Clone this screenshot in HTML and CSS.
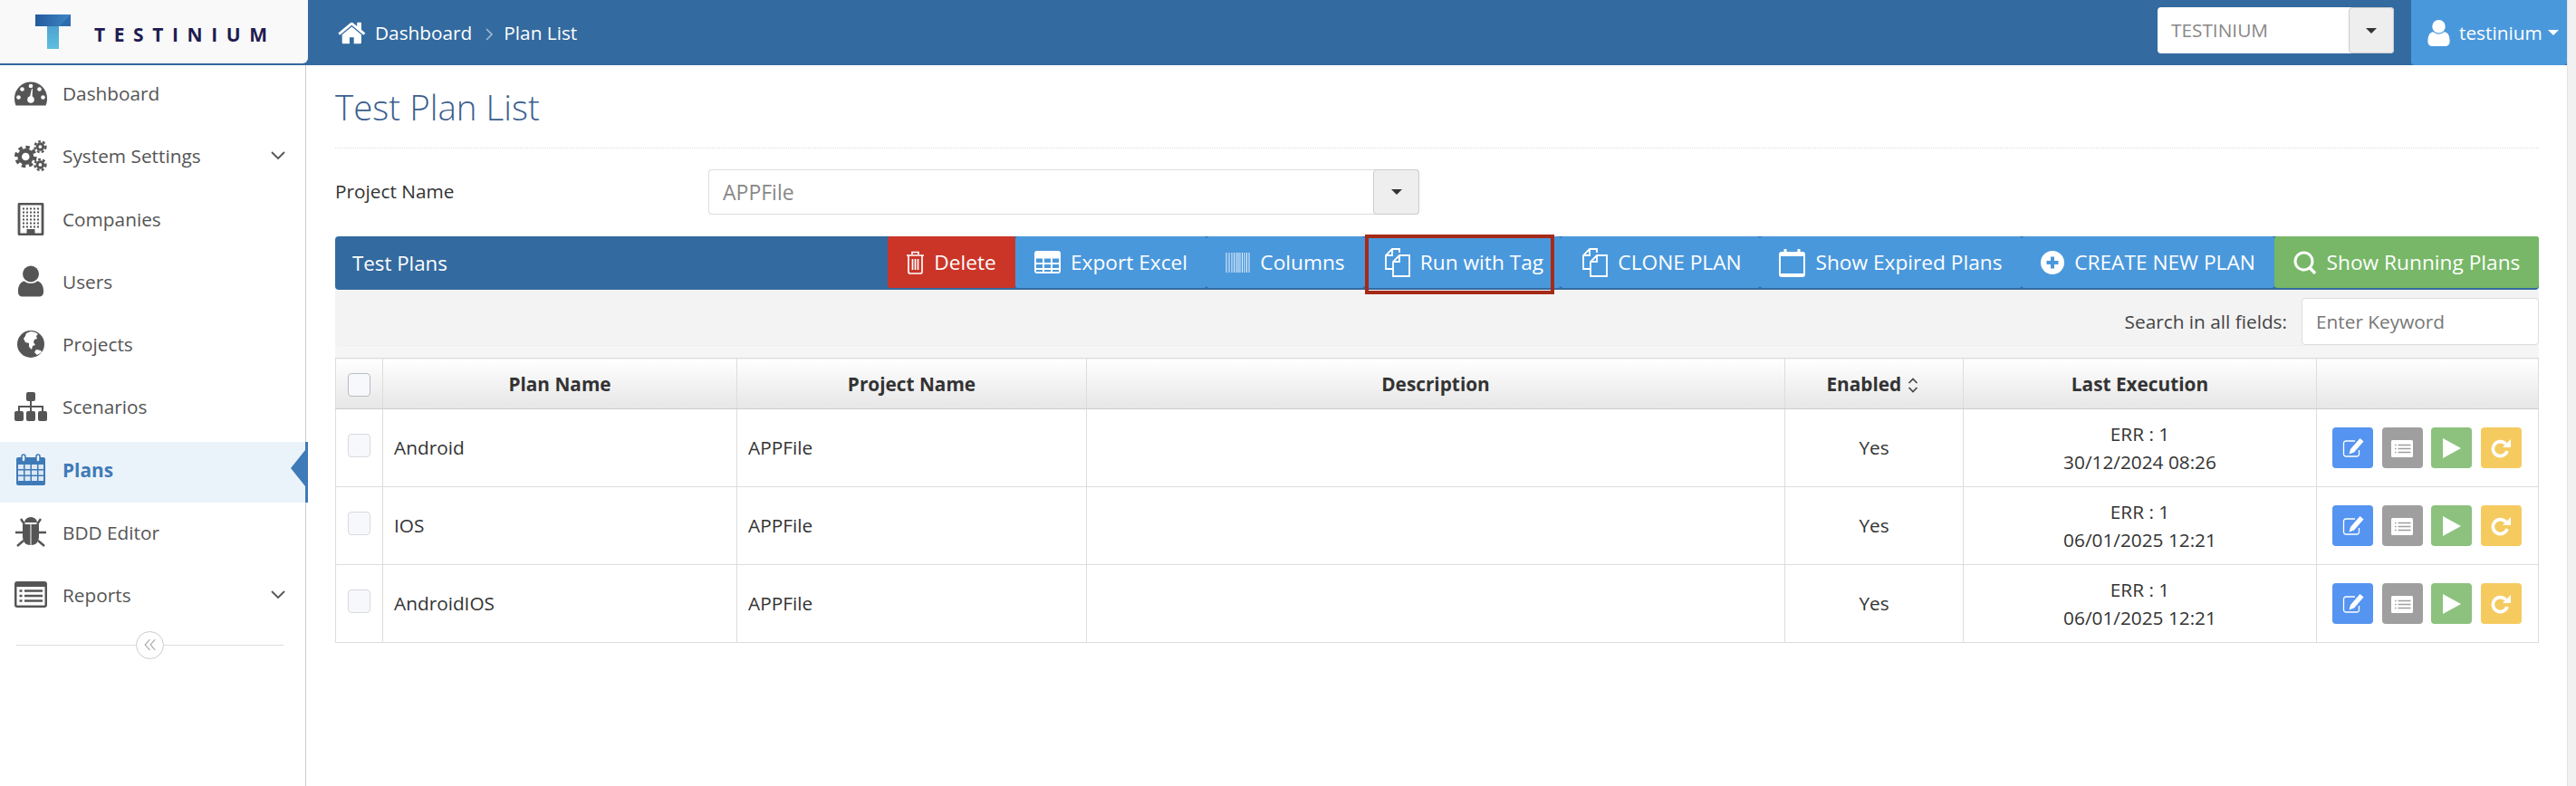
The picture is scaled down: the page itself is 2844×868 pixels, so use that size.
FILE: index.html
```html
<!DOCTYPE html>
<html lang="en">
<head>
  <meta charset="UTF-8" />
  <title>Test Plan List</title>
  <link rel="stylesheet" href="styles.css">
</head>
<body>
  <svg class="defs" width="0" height="0">
    <symbol id="i-edit" viewBox="0 0 24 24">
      <path d="M14 4H4a2.500 2.500 0 0 0-2.500 2.500v12A2.500 2.500 0 0 0 4 21h12a2.500 2.500 0 0 0 2.500-2.500V14" fill="none" stroke="#fff" stroke-width="1.300"/>
      <path d="M19.500 1l4 3.500-10.500 12-5.500 2 1.500-5.500z" fill="#fff"/>
    </symbol>
    <symbol id="i-list" viewBox="0 0 24 20">
      <rect x="0" y="1" width="24" height="19" rx="1.500" fill="#fff"/>
      <path d="M4 6.500h1.500M7.500 6.500h14M4 10.500h1.500M7.500 10.500h14M4 14.500h1.500M7.500 14.500h14" stroke="#9f9f9f" stroke-width="1.300"/>
    </symbol>
    <symbol id="i-play" viewBox="0 0 20 22">
      <path d="M0 0l20 11-20 11z" fill="#fff"/>
    </symbol>
    <symbol id="i-redo" viewBox="0 0 22 22">
      <path d="M16.500 6.500A8 8 0 1 0 18 14" fill="none" stroke="#fff" stroke-width="3.600"/>
      <path d="M22 1v9h-9z" fill="#fff"/>
    </symbol>
    <symbol id="i-copy" viewBox="0 0 32 32">
      <path d="M20 5V1h-8L5 8v15h8" fill="none" stroke="#fff" stroke-width="1.800"/>
      <path d="M12 1v7H5" fill="none" stroke="#fff" stroke-width="1.800"/>
      <path d="M20 8h11v23H13V15z" fill="none" stroke="#fff" stroke-width="1.800"/>
      <path d="M20 8v7h-7" fill="none" stroke="#fff" stroke-width="1.800"/>
    </symbol>
  </svg>

  <div class="app">
    <div class="page">
      <div class="topbar">
        <div class="logo">
          <svg class="logo-mark" viewBox="0 0 39 38">
            <defs>
              <linearGradient id="logoA" x1="0" y1="0" x2="1" y2="0">
                <stop offset="0" stop-color="#245a9e"/>
                <stop offset="1" stop-color="#3f86c4"/>
              </linearGradient>
              <linearGradient id="logoB" x1="0" y1="0" x2="0" y2="1">
                <stop offset="0" stop-color="#4793c6"/>
                <stop offset="1" stop-color="#5cbfe0"/>
              </linearGradient>
            </defs>
            <path d="M0 0h39v13H26V38H13V13H0z" fill="url(#logoB)"/>
            <path d="M0 0h39L26 13H0z" fill="url(#logoA)"/>
            <path d="M39 0v13H26z" fill="#2f6cae"/>
          </svg>
          <span class="logo-text">TESTINIUM</span>
        </div>
        <div class="crumbs">
          <svg class="crumb-home" viewBox="0 0 1792 1792"><path fill="#fff" d="M1408 992v480q0 26-19 45t-45 19h-384v-384h-256v384h-384q-26 0-45-19t-19-45v-480q0-1 .5-3t.5-3l575-474 575 474q1 2 1 6zm223-69l-62 74q-8 9-21 11h-3q-13 0-21-7l-692-577-692 577q-12 8-24 7-13-2-21-11l-62-74q-8-10-7-23.5t11-21.5l719-599q32-26 76-26t76 26l244 204v-195q0-14 9-23t23-9h192q14 0 23 9t9 23v408l219 182q10 8 11 21.5t-7 23.5z"/></svg>
          <span>Dashboard</span>
          <svg class="crumb-sep" viewBox="0 0 8 14"><path d="M1 1l6 6-6 6" fill="none" stroke="#9db9d4" stroke-width="1.600"/></svg>
          <span>Plan List</span>
        </div>
        <div class="top-select">
          <span class="top-select-text">TESTINIUM</span>
          <span class="select-btn"><i class="caret-dark"></i></span>
        </div>
        <div class="user-btn">
          <svg class="user-icon" viewBox="256 128 1280 1536"><path fill="#fff" d="M1536 1399q0 109-62.500 187t-150.500 78h-854q-88 0-150.500-78t-62.500-187q0-85 8.500-160.500t31.500-152 58.500-131 94-89 134.500-34.500q131 128 313 128t313-128q76 0 134.500 34.500t94 89 58.500 131 31.500 152 8.500 160.500zm-256-887q0 159-112.500 271.500t-271.500 112.500-271.500-112.500-112.500-271.500 112.500-271.500 271.500-112.500 271.500 112.500 112.500 271.500z"/></svg>
          <span>testinium</span>
          <i class="caret-white"></i>
        </div>
      </div>

      <div class="content">
        <div class="sidebar">
          <div class="nav-item">
            <svg class="nav-icon" viewBox="0 0 36 36"><path fill="#555" d="M1.500 31.500C.5 29 0 26.500 0 23.500a18 18 0 0 1 36 0c0 3-.5 5.500-1.500 8z"/><g fill="#fff"><circle cx="18" cy="10" r="2.300"/><circle cx="8.500" cy="13.500" r="2.300"/><circle cx="27.500" cy="13.500" r="2.300"/><circle cx="4.500" cy="22.500" r="2.300"/><circle cx="31.500" cy="22.500" r="2.300"/><circle cx="18" cy="25" r="3.800"/><path d="M16.500 24l2.500-11 1 .3-.5 11z"/></g></svg>
            <span>Dashboard</span>
          </div>
          <div class="nav-item">
            <svg class="nav-icon" viewBox="0 0 38 38"><g fill="none" stroke="#555"><circle cx="13" cy="20" r="7" stroke-width="5"/><circle cx="13" cy="20" r="11" stroke-width="4" stroke-dasharray="4.600 4"/><circle cx="30" cy="8.500" r="3.500" stroke-width="3"/><circle cx="30" cy="8.500" r="6.300" stroke-width="2.500" stroke-dasharray="2.900 2.400"/><circle cx="30" cy="29.500" r="3.500" stroke-width="3"/><circle cx="30" cy="29.500" r="6.300" stroke-width="2.500" stroke-dasharray="2.900 2.400"/></g></svg>
            <span>System Settings</span>
            <svg class="nav-chev" viewBox="0 0 16 10"><path d="M1 1l7 7 7-7" fill="none" stroke="#555" stroke-width="1.800"/></svg>
          </div>
          <div class="nav-item">
            <svg class="nav-icon" viewBox="0 0 36 36"><rect x="5" y="1" width="26" height="34" rx="1" fill="none" stroke="#555" stroke-width="2.800"/><path d="M9 6.500h18M9 10.500h18M9 14.500h18M9 18.500h18M9 22.500h18M9 26.500h18" stroke="#555" stroke-width="2" stroke-dasharray="2 2"/><path d="M13.500 35v-6h9v6z" fill="#555"/></svg>
            <span>Companies</span>
          </div>
          <div class="nav-item">
            <svg class="nav-icon" viewBox="0 0 36 36"><circle cx="18" cy="9.500" r="9" fill="#555"/><path fill="#555" d="M4 28c0-6 3-10 7-10.500 2 1.800 4.500 2.500 7 2.500s5-.7 7-2.500c4 .5 7 4.500 7 10.500v2c0 2.500-2 4.500-4.500 4.500h-19C6 34.500 4 32.500 4 30z"/></svg>
            <span>Users</span>
          </div>
          <div class="nav-item">
            <svg class="nav-icon" viewBox="0 0 36 36"><circle cx="18" cy="18" r="15" fill="#555"/><path fill="#fff" d="M13 6l5-2 5 1 3 2-2 2 1 3-3 1-1 3 2 3-3 1-1 4-3-3 0-4-4-1-2-4 2-3zM24 24l5 1 1 2-5 3-3-3z"/></svg>
            <span>Projects</span>
          </div>
          <div class="nav-item">
            <svg class="nav-icon" viewBox="0 0 36 36"><g fill="#555"><rect x="13" y="2" width="10" height="10" rx="2"/><rect x="0" y="23" width="10" height="11" rx="2"/><rect x="13" y="23" width="10" height="11" rx="2"/><rect x="26" y="23" width="10" height="11" rx="2"/></g><path d="M18 11v12M5 23v-5h26v5" fill="none" stroke="#555" stroke-width="2"/></svg>
            <span>Scenarios</span>
          </div>
          <div class="nav-item active">
            <svg class="nav-icon" viewBox="0 0 36 36"><rect x="2" y="4" width="32" height="31" rx="2" fill="#3f7ab8"/><g fill="#dce8f4"><rect x="4" y="12" width="6" height="5"/><rect x="11.500" y="12" width="6" height="5"/><rect x="19" y="12" width="6" height="5"/><rect x="26.500" y="12" width="5.500" height="5"/><rect x="4" y="18.500" width="6" height="5"/><rect x="11.500" y="18.500" width="6" height="5"/><rect x="19" y="18.500" width="6" height="5"/><rect x="26.500" y="18.500" width="5.500" height="5"/><rect x="4" y="25" width="6" height="5"/><rect x="11.500" y="25" width="6" height="5"/><rect x="19" y="25" width="6" height="5"/><rect x="26.500" y="25" width="5.500" height="5"/></g><g fill="#ebf3fa" stroke="#3f7ab8" stroke-width="1.500"><rect x="8" y="1" width="4" height="8" rx="2"/><rect x="24" y="1" width="4" height="8" rx="2"/></g></svg>
            <span>Plans</span>
          </div>
          <div class="nav-item">
            <svg class="nav-icon" viewBox="0 0 36 36"><g fill="#555"><path d="M11 7a7 6 0 0 1 14 0z"/><path d="M9 9h8.500v23C12 32 9 28 9 22zM27 9h-8.500v23C24 32 27 28 27 22z"/></g><path d="M7 3l4 6M29 3l-4 6M1 18h8M35 18h-8M3 33l7-6M33 33l-7-6" stroke="#555" stroke-width="2.400" fill="none"/></svg>
            <span>BDD Editor</span>
          </div>
          <div class="nav-item">
            <svg class="nav-icon" viewBox="0 0 36 36"><rect x="0" y="3" width="36" height="29" rx="3" fill="#555"/><rect x="2.500" y="9" width="31" height="20.500" fill="#fff"/><path d="M5.500 13.500h3M11 13.500h20M5.500 19h3M11 19h20M5.500 24.500h3M11 24.500h20" stroke="#555" stroke-width="2.400"/></svg>
            <span>Reports</span>
            <svg class="nav-chev" viewBox="0 0 16 10"><path d="M1 1l7 7 7-7" fill="none" stroke="#555" stroke-width="1.800"/></svg>
          </div>
          <div class="collapse">
            <span class="collapse-line"></span>
            <span class="collapse-btn"><svg viewBox="0 0 12 12" width="14" height="14"><path d="M5.500 1L1 6l4.500 5M10.500 1L6 6l4.500 5" fill="none" stroke="#aaa" stroke-width="1"/></svg></span>
            <span class="collapse-line"></span>
          </div>
        </div>

        <div class="main">
          <h1 class="page-title">Test Plan List</h1>
          <div class="form-row">
            <label class="form-label">Project Name</label>
            <div class="project-select">
              <span class="project-select-text">APPFile</span>
              <span class="select-btn"><i class="caret-dark"></i></span>
            </div>
          </div>

          <div class="toolbar">
            <div class="toolbar-title">Test Plans</div>
            <div class="toolbar-btns">
              <a class="tb-btn red">
                <svg class="tb-icon" width="19" height="26" viewBox="0 0 19 26"><path d="M6 4V1.500h7V4M0 5h19M2 5v18a2 2 0 0 0 2 2h11a2 2 0 0 0 2-2V5M6.500 9v12M9.500 9v12M12.500 9v12" fill="none" stroke="#fff" stroke-width="1.700"/></svg>
                Delete
              </a>
              <a class="tb-btn">
                <svg class="tb-icon" width="29" height="25" viewBox="0 0 29 25"><rect width="29" height="25" rx="3" fill="#fff"/><path d="M2 8.500h7v4.500H2zM11 8.500h7v4.500h-7zM20 8.500h7v4.500h-7zM2 15h7v4H2zM11 15h7v4h-7zM20 15h7v4h-7zM2 21h7v2H2zM11 21h7v2h-7zM20 21h7v2h-7z" fill="#4a98dc"/></svg>
                Export Excel
              </a>
              <a class="tb-btn">
                <svg class="tb-icon" width="27" height="22" viewBox="0 0 27 22"><path d="M1 0v22M4 0v22M7 0v22M9.500 0v22M12 0v22M14 0v22M16 0v22M18.500 0v22M21 0v22M23.500 0v22M26 0v22" stroke="#eaf3fb" stroke-width="1"/></svg>
                Columns
              </a>
              <div class="tb-wrap">
                <a class="tb-btn run">
                  <svg class="tb-icon" width="32" height="32"><use href="#i-copy"/></svg>
                  Run with Tag
                </a>
                <span class="red-box"></span>
              </div>
              <a class="tb-btn">
                <svg class="tb-icon" width="32" height="32"><use href="#i-copy"/></svg>
                CLONE PLAN
              </a>
              <a class="tb-btn">
                <svg class="tb-icon" width="29" height="32" viewBox="0 0 29 32"><rect x="1" y="5" width="27" height="26" rx="2" fill="none" stroke="#fff" stroke-width="2"/><path d="M1 9h27V6H1zM1 31h27v-3H1z" fill="#fff"/><path d="M7 1v6M22 1v6" stroke="#fff" stroke-width="3"/></svg>
                Show Expired Plans
              </a>
              <a class="tb-btn">
                <svg class="tb-icon" width="26" height="26" viewBox="0 0 26 26"><circle cx="13" cy="13" r="13" fill="#fff"/><path d="M13 6.500v13M6.500 13h13" stroke="#4a98dc" stroke-width="4"/></svg>
                CREATE NEW PLAN
              </a>
              <a class="tb-btn green">
                <svg class="tb-icon" width="26" height="26" viewBox="0 0 26 26"><circle cx="11.500" cy="11.500" r="9.500" fill="none" stroke="#fff" stroke-width="3"/><path d="M17.500 18l6.500 7" stroke="#fff" stroke-width="3.400"/></svg>
                Show Running Plans
              </a>
            </div>
          </div>

          <div class="search-row">
            <span class="search-label">Search in all fields:</span>
            <input class="search-input" type="text" placeholder="Enter Keyword" />
          </div>
          <div class="strip"></div>

          <table class="plans">
            <colgroup>
              <col class="c-check"><col class="c-name"><col class="c-project"><col class="c-desc"><col class="c-enabled"><col class="c-exec"><col class="c-actions">
            </colgroup>
            <thead>
              <tr>
                <th><span class="check"></span></th>
                <th>Plan Name</th>
                <th>Project Name</th>
                <th>Description</th>
                <th>Enabled <svg class="sort" viewBox="0 0 12 17" width="12" height="17"><path d="M1.500 6L6 1.500 10.500 6M1.500 11L6 15.500 10.500 11" fill="none" stroke="#444" stroke-width="1.700"/></svg></th>
                <th>Last Execution</th>
                <th></th>
              </tr>
            </thead>
            <tbody>
              <tr>
                <td class="td-check"><span class="check light"></span></td>
                <td>Android</td>
                <td>APPFile</td>
                <td></td>
                <td class="center">Yes</td>
                <td class="center">ERR : 1<br>30/12/2024 08:26</td>
                <td>
                  <div class="actions">
                    <a class="act blue"><svg width="24" height="24"><use href="#i-edit"/></svg></a>
                    <a class="act gray"><svg width="24" height="20"><use href="#i-list"/></svg></a>
                    <a class="act lgreen"><svg width="20" height="22"><use href="#i-play"/></svg></a>
                    <a class="act yellow"><svg width="22" height="22"><use href="#i-redo"/></svg></a>
                  </div>
                </td>
              </tr>
              <tr>
                <td class="td-check"><span class="check light"></span></td>
                <td>IOS</td>
                <td>APPFile</td>
                <td></td>
                <td class="center">Yes</td>
                <td class="center">ERR : 1<br>06/01/2025 12:21</td>
                <td>
                  <div class="actions">
                    <a class="act blue"><svg width="24" height="24"><use href="#i-edit"/></svg></a>
                    <a class="act gray"><svg width="24" height="20"><use href="#i-list"/></svg></a>
                    <a class="act lgreen"><svg width="20" height="22"><use href="#i-play"/></svg></a>
                    <a class="act yellow"><svg width="22" height="22"><use href="#i-redo"/></svg></a>
                  </div>
                </td>
              </tr>
              <tr>
                <td class="td-check"><span class="check light"></span></td>
                <td>AndroidIOS</td>
                <td>APPFile</td>
                <td></td>
                <td class="center">Yes</td>
                <td class="center">ERR : 1<br>06/01/2025 12:21</td>
                <td>
                  <div class="actions">
                    <a class="act blue"><svg width="24" height="24"><use href="#i-edit"/></svg></a>
                    <a class="act gray"><svg width="24" height="20"><use href="#i-list"/></svg></a>
                    <a class="act lgreen"><svg width="20" height="22"><use href="#i-play"/></svg></a>
                    <a class="act yellow"><svg width="22" height="22"><use href="#i-redo"/></svg></a>
                  </div>
                </td>
              </tr>
            </tbody>
          </table>
        </div>
      </div>
    </div>
    <div class="scroll-track"></div>
  </div>
</body>
</html>
```

FILE: styles.css
```css
* {
  box-sizing: border-box;
}
html, body {
  height: 100%;
}
body {
  margin: 0;
  font-family: "Open Sans", Arial, sans-serif;
  font-size: 20.8px;
  color: #333;
  background-color: #fff;
  overflow: hidden;
}
.defs {
  display: block;
  height: 0;
}
.app {
  display: flex;
  height: 868px;
}
.page {
  width: 2834px;
  display: flex;
  flex-direction: column;
}
.scroll-track {
  width: 10px;
  background-color: #f1f1f1;
  border-left: 1px solid #e4e4e4;
}

/* top bar */
.topbar {
  height: 72px;
  flex: none;
  display: flex;
  align-items: flex-start;
  background-color: #336a9f;
  color: #fff;
}
.logo {
  width: 340px;
  height: 70px;
  background-color: #f9f9f9;
  border-bottom-right-radius: 6px;
  display: flex;
  align-items: flex-start;
  padding-left: 39px;
}
.logo-mark {
  width: 39px;
  height: 38px;
  margin-top: 16px;
}
.logo-text {
  margin: 23px 0 0 26px;
  font-size: 21px;
  line-height: 30px;
  font-weight: 700;
  letter-spacing: 9.6px;
  color: #1f1c50;
}
.crumbs {
  display: flex;
  align-items: center;
  height: 72px;
  margin-left: 33px;
}
.crumb-home {
  width: 33px;
  height: 33px;
  margin-right: 8px;
}
.crumb-sep {
  width: 8px;
  height: 14px;
  margin: 4px 12px 0 15px;
}
.top-select {
  margin: 8px 0 0 auto;
  width: 261px;
  height: 51px;
  background-color: #fff;
  border-radius: 4px;
  display: flex;
  justify-content: space-between;
  color: #888;
}
.top-select-text {
  padding-left: 15px;
  line-height: 51px;
}
.select-btn {
  width: 50px;
  display: flex;
  align-items: center;
  justify-content: center;
  background-color: #eee;
  border: 1px solid #ccc;
  border-radius: 4px;
}
.caret-dark {
  width: 0;
  height: 0;
  border-left: 6px solid transparent;
  border-right: 6px solid transparent;
  border-top: 6px solid #333;
}
.user-btn {
  width: 172px;
  height: 72px;
  margin-left: 19px;
  padding-left: 18px;
  background-color: #4a98dc;
  border-radius: 0 0 4px 4px;
  display: flex;
  align-items: center;
}
.user-icon {
  width: 25px;
  height: 29px;
  margin-right: 10px;
}
.caret-white {
  width: 0;
  height: 0;
  margin-left: 6px;
  border-left: 6px solid transparent;
  border-right: 6px solid transparent;
  border-top: 6px solid #fff;
}

/* sidebar */
.content {
  flex: 1;
  display: flex;
}
.sidebar {
  width: 338px;
  flex: none;
  border-right: 1px solid #ccc;
}
.nav-item {
  position: relative;
  height: 67px;
  margin-bottom: 2.25px;
  padding: 0 22px 5px 16px;
  display: flex;
  align-items: center;
  color: #555;
}
.nav-icon {
  width: 36px;
  height: 36px;
  flex: none;
  margin-right: 17px;
}
.nav-chev {
  width: 16px;
  height: 10px;
  margin-left: auto;
}
.nav-item.active {
  width: 340px;
  background-color: #ebf3fa;
  border-right: 3px solid #3f7ab8;
  color: #3f7ab8;
  font-weight: 700;
}
.nav-item.active::after {
  content: "";
  position: absolute;
  right: 0;
  top: 9px;
  border-top: 20px solid transparent;
  border-bottom: 20px solid transparent;
  border-right: 16px solid #3f7ab8;
}
.collapse {
  display: flex;
  align-items: center;
  height: 30px;
  margin-top: 4px;
  padding: 0 24px 0 18px;
}
.collapse-line {
  flex: 1;
  height: 1px;
  background-color: #ddd;
}
.collapse-btn {
  width: 31px;
  height: 31px;
  border: 1px solid #ccc;
  border-radius: 50%;
  display: flex;
  align-items: center;
  justify-content: center;
}

/* main */
.main {
  flex: 1;
  padding: 0 32px;
}
.page-title {
  margin: 0;
  padding: 22px 0 22px;
  height: 92px;
  font-size: 38.5px;
  line-height: 48px;
  font-weight: 300;
  color: #3c5f8e;
  border-bottom: 1px dotted #ddd;
}
.form-row {
  display: flex;
  align-items: center;
  height: 49px;
  margin-top: 23px;
}
.form-label {
  width: 412px;
  padding-bottom: 2px;
}
.project-select {
  width: 785px;
  height: 50px;
  border: 1px solid #ddd;
  border-right: none;
  border-radius: 4px;
  display: flex;
  justify-content: space-between;
  color: #888;
  font-size: 23px;
}
.project-select-text {
  padding-left: 15px;
  line-height: 48px;
}
.project-select .select-btn {
  width: 51px;
  margin: -1px 0;
}

/* toolbar */
.toolbar {
  margin-top: 25px;
  height: 59px;
  background-color: #336a9f;
  border-radius: 4px;
  display: flex;
  justify-content: space-between;
  color: #fff;
  font-size: 22.7px;
}
.toolbar-title {
  padding-left: 19px;
  line-height: 60px;
  font-size: 22.3px;
}
.toolbar-btns {
  display: grid;
  grid-template-columns: 141px 211px 174px 217px 220px 289px 279px 292px;
}
.tb-wrap {
  position: relative;
}
.tb-btn {
  height: 57px;
  display: flex;
  align-items: center;
  justify-content: center;
  background-color: #4a98dc;
  border-radius: 3px;
  color: #fff;
}
.tb-icon {
  margin-right: 11px;
  flex: none;
}
.tb-btn.red {
  background-color: #cb3528;
}
.tb-btn.green {
  background-color: #77b767;
}
.red-box {
  position: absolute;
  left: 1px;
  right: 7px;
  top: -2px;
  bottom: -5px;
  border: 4px solid #a52a17;
}
.search-row {
  height: 61px;
  padding-top: 8px;
  display: flex;
  align-items: center;
  justify-content: flex-end;
  background-color: #f3f3f3;
}
.search-label {
  margin-right: 16px;
  color: #444;
}
.search-input {
  width: 262px;
  height: 52px;
  padding: 0 15px;
  border: 1px solid #ddd;
  border-radius: 4px;
  background-color: #fff;
  font: inherit;
}
.search-input::placeholder {
  color: #777;
  opacity: 1;
}
.strip {
  height: 14px;
  background-color: #f5f5f5;
  border-top: 1px solid #eee;
  border-radius: 4px 4px 0 0;
}

/* table */
.plans {
  width: 2432px;
  table-layout: fixed;
  border-collapse: collapse;
}
.c-check { width: 52px; }
.c-name { width: 391px; }
.c-project { width: 386px; }
.c-desc { width: 771px; }
.c-enabled { width: 197px; }
.c-exec { width: 390px; }
.c-actions { width: 245px; }
.plans th {
  height: 56px;
  padding: 0;
  font-weight: 700;
  text-align: center;
  background: linear-gradient(#fff, #e6e6e6);
  border: 1px solid #ddd;
  border-bottom-color: #ccc;
}
.plans td {
  height: 86px;
  padding: 0 0 0 12px;
  line-height: 31px;
  border: 1px solid #ddd;
}
.plans td.center {
  text-align: center;
  padding: 0;
}
.plans td.td-check {
  padding: 0 0 8px 0;
  text-align: center;
}
.check {
  display: inline-block;
  width: 25px;
  height: 26px;
  vertical-align: middle;
  background-color: #f6f8fc;
  border: 1px solid #b8bcc2;
  border-radius: 4px;
}
.check.light {
  border-color: #d8dade;
}
.sort {
  vertical-align: -2px;
  margin: 0 4px 0 1px;
}
.actions {
  display: flex;
  gap: 9.5px;
  padding-left: 5px;
}
.act {
  width: 45px;
  height: 45px;
  border-radius: 4px;
  display: flex;
  align-items: center;
  justify-content: center;
}
.act.blue { background-color: #5594f0; }
.act.gray { background-color: #9f9f9f; }
.act.lgreen { background-color: #8cc27e; }
.act.yellow { background-color: #f5cb60; }
```
